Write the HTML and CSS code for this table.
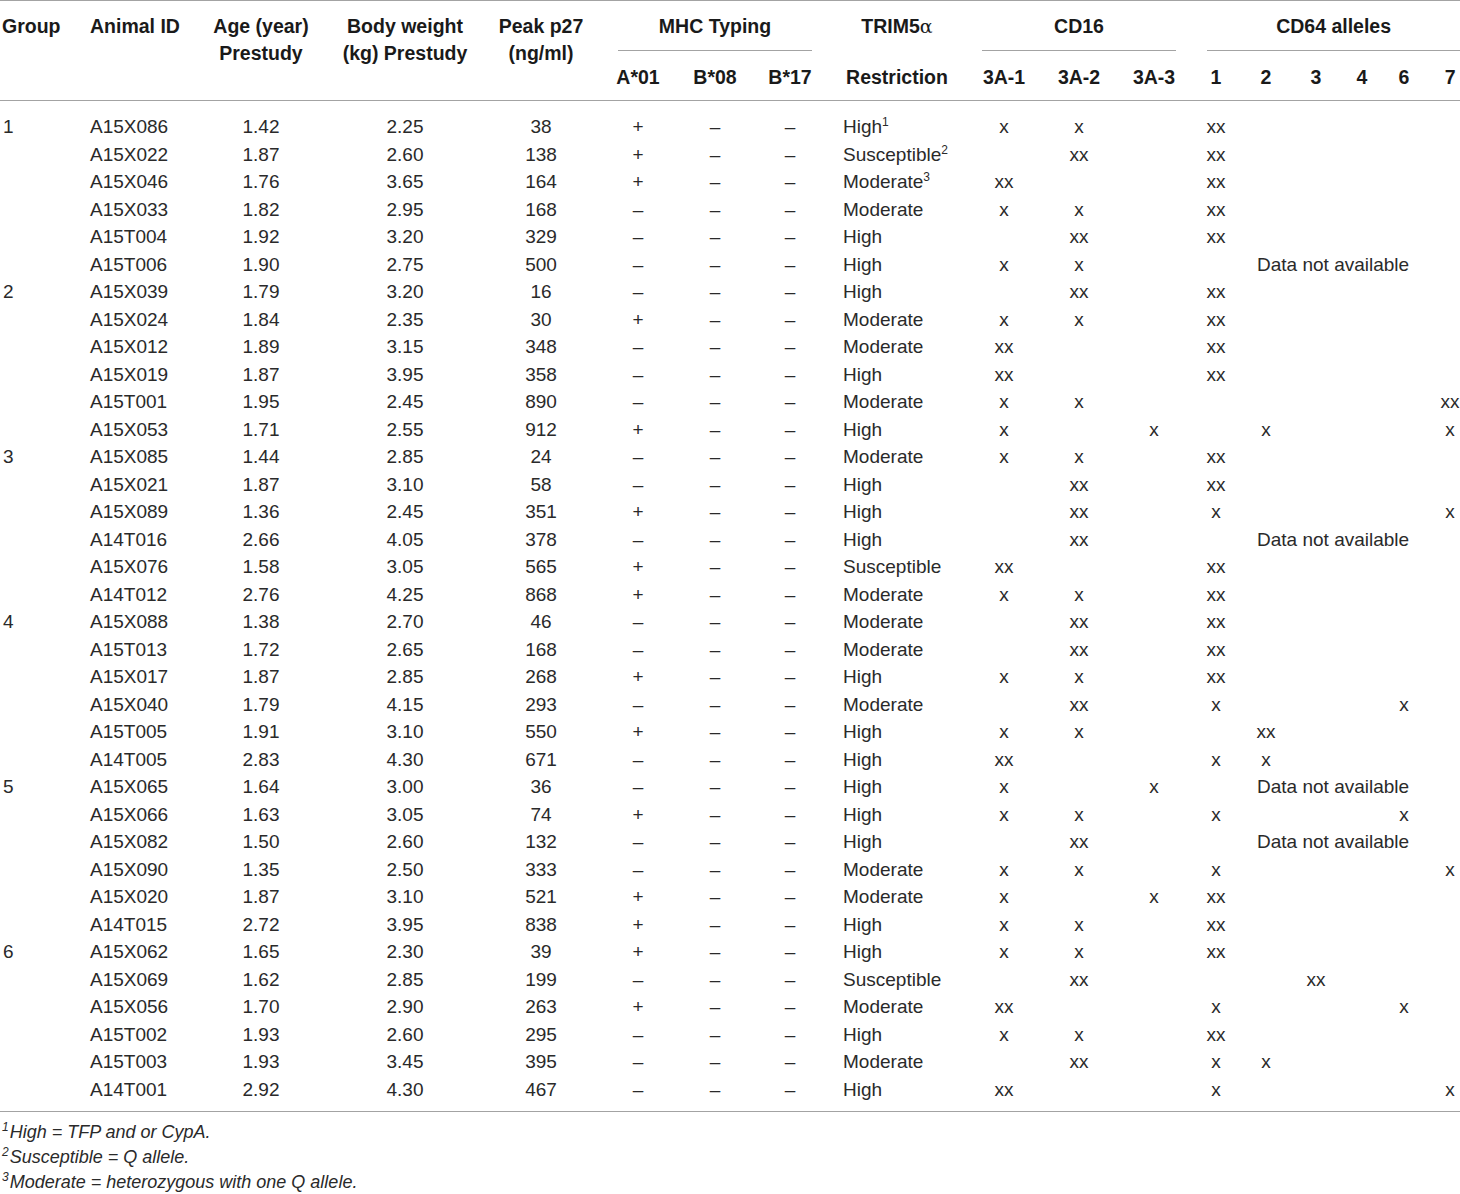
FILE: index.html
```html
<!DOCTYPE html>
<html lang="en">
<head>
<meta charset="utf-8">
<title>Table</title>
<link rel="stylesheet" href="styles.css">
</head>
<body>
<div class="table-wrap">
<table class="data">
<colgroup>
<col class="w88"><col class="w117"><col class="w112"><col class="w176"><col class="w96">
<col class="w98"><col class="w56"><col class="w94">
<col class="w120">
<col class="w94"><col class="w56"><col class="w94">
<col class="w30"><col class="w70"><col class="w30"><col class="w62"><col class="w22"><col class="w45">
</colgroup>
<thead>
<tr class="h1">
<th rowspan="2" class="span l">Group</th>
<th rowspan="2" class="span l">Animal ID</th>
<th rowspan="2" class="span">Age (year)<br>Prestudy</th>
<th rowspan="2" class="span">Body weight<br>(kg) Prestudy</th>
<th rowspan="2" class="span">Peak p27<br>(ng/ml)</th>
<th colspan="3" class="grp"><div class="rule mhc">MHC Typing</div></th>
<th class="top">TRIM5<span class="alpha">α</span></th>
<th colspan="3" class="grp"><div class="rule cd16">CD16</div></th>
<th colspan="6" class="grp"><div class="rule cd64">CD64 alleles</div></th>
</tr>
<tr class="h2">
<th>A*01</th><th>B*08</th><th>B*17</th>
<th>Restriction</th>
<th>3A-1</th><th>3A-2</th><th>3A-3</th>
<th>1</th><th>2</th><th>3</th><th>4</th><th>6</th><th class="c7">7</th>
</tr>
</thead>
<tbody>
<tr class="first"><td>1</td><td>A15X086</td><td>1.42</td><td>2.25</td><td>38</td><td>+</td><td>–</td><td>–</td><td>High<sup>1</sup></td><td>x</td><td>x</td><td></td><td>xx</td><td></td><td></td><td></td><td></td><td></td></tr>
<tr><td></td><td>A15X022</td><td>1.87</td><td>2.60</td><td>138</td><td>+</td><td>–</td><td>–</td><td>Susceptible<sup>2</sup></td><td></td><td>xx</td><td></td><td>xx</td><td></td><td></td><td></td><td></td><td></td></tr>
<tr><td></td><td>A15X046</td><td>1.76</td><td>3.65</td><td>164</td><td>+</td><td>–</td><td>–</td><td>Moderate<sup>3</sup></td><td>xx</td><td></td><td></td><td>xx</td><td></td><td></td><td></td><td></td><td></td></tr>
<tr><td></td><td>A15X033</td><td>1.82</td><td>2.95</td><td>168</td><td>–</td><td>–</td><td>–</td><td>Moderate</td><td>x</td><td>x</td><td></td><td>xx</td><td></td><td></td><td></td><td></td><td></td></tr>
<tr><td></td><td>A15T004</td><td>1.92</td><td>3.20</td><td>329</td><td>–</td><td>–</td><td>–</td><td>High</td><td></td><td>xx</td><td></td><td>xx</td><td></td><td></td><td></td><td></td><td></td></tr>
<tr><td></td><td>A15T006</td><td>1.90</td><td>2.75</td><td>500</td><td>–</td><td>–</td><td>–</td><td>High</td><td>x</td><td>x</td><td></td><td></td><td colspan="5" class="na">Data not available</td></tr>
<tr><td>2</td><td>A15X039</td><td>1.79</td><td>3.20</td><td>16</td><td>–</td><td>–</td><td>–</td><td>High</td><td></td><td>xx</td><td></td><td>xx</td><td></td><td></td><td></td><td></td><td></td></tr>
<tr><td></td><td>A15X024</td><td>1.84</td><td>2.35</td><td>30</td><td>+</td><td>–</td><td>–</td><td>Moderate</td><td>x</td><td>x</td><td></td><td>xx</td><td></td><td></td><td></td><td></td><td></td></tr>
<tr><td></td><td>A15X012</td><td>1.89</td><td>3.15</td><td>348</td><td>–</td><td>–</td><td>–</td><td>Moderate</td><td>xx</td><td></td><td></td><td>xx</td><td></td><td></td><td></td><td></td><td></td></tr>
<tr><td></td><td>A15X019</td><td>1.87</td><td>3.95</td><td>358</td><td>–</td><td>–</td><td>–</td><td>High</td><td>xx</td><td></td><td></td><td>xx</td><td></td><td></td><td></td><td></td><td></td></tr>
<tr><td></td><td>A15T001</td><td>1.95</td><td>2.45</td><td>890</td><td>–</td><td>–</td><td>–</td><td>Moderate</td><td>x</td><td>x</td><td></td><td></td><td></td><td></td><td></td><td></td><td>xx</td></tr>
<tr><td></td><td>A15X053</td><td>1.71</td><td>2.55</td><td>912</td><td>+</td><td>–</td><td>–</td><td>High</td><td>x</td><td></td><td>x</td><td></td><td>x</td><td></td><td></td><td></td><td>x</td></tr>
<tr><td>3</td><td>A15X085</td><td>1.44</td><td>2.85</td><td>24</td><td>–</td><td>–</td><td>–</td><td>Moderate</td><td>x</td><td>x</td><td></td><td>xx</td><td></td><td></td><td></td><td></td><td></td></tr>
<tr><td></td><td>A15X021</td><td>1.87</td><td>3.10</td><td>58</td><td>–</td><td>–</td><td>–</td><td>High</td><td></td><td>xx</td><td></td><td>xx</td><td></td><td></td><td></td><td></td><td></td></tr>
<tr><td></td><td>A15X089</td><td>1.36</td><td>2.45</td><td>351</td><td>+</td><td>–</td><td>–</td><td>High</td><td></td><td>xx</td><td></td><td>x</td><td></td><td></td><td></td><td></td><td>x</td></tr>
<tr><td></td><td>A14T016</td><td>2.66</td><td>4.05</td><td>378</td><td>–</td><td>–</td><td>–</td><td>High</td><td></td><td>xx</td><td></td><td></td><td colspan="5" class="na">Data not available</td></tr>
<tr><td></td><td>A15X076</td><td>1.58</td><td>3.05</td><td>565</td><td>+</td><td>–</td><td>–</td><td>Susceptible</td><td>xx</td><td></td><td></td><td>xx</td><td></td><td></td><td></td><td></td><td></td></tr>
<tr><td></td><td>A14T012</td><td>2.76</td><td>4.25</td><td>868</td><td>+</td><td>–</td><td>–</td><td>Moderate</td><td>x</td><td>x</td><td></td><td>xx</td><td></td><td></td><td></td><td></td><td></td></tr>
<tr><td>4</td><td>A15X088</td><td>1.38</td><td>2.70</td><td>46</td><td>–</td><td>–</td><td>–</td><td>Moderate</td><td></td><td>xx</td><td></td><td>xx</td><td></td><td></td><td></td><td></td><td></td></tr>
<tr><td></td><td>A15T013</td><td>1.72</td><td>2.65</td><td>168</td><td>–</td><td>–</td><td>–</td><td>Moderate</td><td></td><td>xx</td><td></td><td>xx</td><td></td><td></td><td></td><td></td><td></td></tr>
<tr><td></td><td>A15X017</td><td>1.87</td><td>2.85</td><td>268</td><td>+</td><td>–</td><td>–</td><td>High</td><td>x</td><td>x</td><td></td><td>xx</td><td></td><td></td><td></td><td></td><td></td></tr>
<tr><td></td><td>A15X040</td><td>1.79</td><td>4.15</td><td>293</td><td>–</td><td>–</td><td>–</td><td>Moderate</td><td></td><td>xx</td><td></td><td>x</td><td></td><td></td><td></td><td>x</td><td></td></tr>
<tr><td></td><td>A15T005</td><td>1.91</td><td>3.10</td><td>550</td><td>+</td><td>–</td><td>–</td><td>High</td><td>x</td><td>x</td><td></td><td></td><td>xx</td><td></td><td></td><td></td><td></td></tr>
<tr><td></td><td>A14T005</td><td>2.83</td><td>4.30</td><td>671</td><td>–</td><td>–</td><td>–</td><td>High</td><td>xx</td><td></td><td></td><td>x</td><td>x</td><td></td><td></td><td></td><td></td></tr>
<tr><td>5</td><td>A15X065</td><td>1.64</td><td>3.00</td><td>36</td><td>–</td><td>–</td><td>–</td><td>High</td><td>x</td><td></td><td>x</td><td></td><td colspan="5" class="na">Data not available</td></tr>
<tr><td></td><td>A15X066</td><td>1.63</td><td>3.05</td><td>74</td><td>+</td><td>–</td><td>–</td><td>High</td><td>x</td><td>x</td><td></td><td>x</td><td></td><td></td><td></td><td>x</td><td></td></tr>
<tr><td></td><td>A15X082</td><td>1.50</td><td>2.60</td><td>132</td><td>–</td><td>–</td><td>–</td><td>High</td><td></td><td>xx</td><td></td><td></td><td colspan="5" class="na">Data not available</td></tr>
<tr><td></td><td>A15X090</td><td>1.35</td><td>2.50</td><td>333</td><td>–</td><td>–</td><td>–</td><td>Moderate</td><td>x</td><td>x</td><td></td><td>x</td><td></td><td></td><td></td><td></td><td>x</td></tr>
<tr><td></td><td>A15X020</td><td>1.87</td><td>3.10</td><td>521</td><td>+</td><td>–</td><td>–</td><td>Moderate</td><td>x</td><td></td><td>x</td><td>xx</td><td></td><td></td><td></td><td></td><td></td></tr>
<tr><td></td><td>A14T015</td><td>2.72</td><td>3.95</td><td>838</td><td>+</td><td>–</td><td>–</td><td>High</td><td>x</td><td>x</td><td></td><td>xx</td><td></td><td></td><td></td><td></td><td></td></tr>
<tr><td>6</td><td>A15X062</td><td>1.65</td><td>2.30</td><td>39</td><td>+</td><td>–</td><td>–</td><td>High</td><td>x</td><td>x</td><td></td><td>xx</td><td></td><td></td><td></td><td></td><td></td></tr>
<tr><td></td><td>A15X069</td><td>1.62</td><td>2.85</td><td>199</td><td>–</td><td>–</td><td>–</td><td>Susceptible</td><td></td><td>xx</td><td></td><td></td><td></td><td>xx</td><td></td><td></td><td></td></tr>
<tr><td></td><td>A15X056</td><td>1.70</td><td>2.90</td><td>263</td><td>+</td><td>–</td><td>–</td><td>Moderate</td><td>xx</td><td></td><td></td><td>x</td><td></td><td></td><td></td><td>x</td><td></td></tr>
<tr><td></td><td>A15T002</td><td>1.93</td><td>2.60</td><td>295</td><td>–</td><td>–</td><td>–</td><td>High</td><td>x</td><td>x</td><td></td><td>xx</td><td></td><td></td><td></td><td></td><td></td></tr>
<tr><td></td><td>A15T003</td><td>1.93</td><td>3.45</td><td>395</td><td>–</td><td>–</td><td>–</td><td>Moderate</td><td></td><td>xx</td><td></td><td>x</td><td>x</td><td></td><td></td><td></td><td></td></tr>
<tr class="last"><td></td><td>A14T001</td><td>2.92</td><td>4.30</td><td>467</td><td>–</td><td>–</td><td>–</td><td>High</td><td>xx</td><td></td><td></td><td>x</td><td></td><td></td><td></td><td></td><td>x</td></tr>
</tbody>
</table>
</div>
<div class="notes">
<p class="note"><sup>1</sup>High = TFP and or CypA.</p>
<p class="note"><sup>2</sup>Susceptible = Q allele.</p>
<p class="note"><sup>3</sup>Moderate = heterozygous with one Q allele.</p>
</div>
</body>
</html>
```

FILE: styles.css
```css
html, body {
  margin: 0;
  padding: 0;
  background: #ffffff;
}

body {
  font-family: "Liberation Sans", Arial, sans-serif;
  color: #231f20;
  width: 1460px;
}

.table-wrap {
  border-top: 1px solid #a3a3a3;
}

.data {
  width: 1460px;
  table-layout: fixed;
  border-collapse: separate;
  border-spacing: 0;
}

.w88 { width: 88px; }
.w117 { width: 117px; }
.w112 { width: 112px; }
.w176 { width: 176px; }
.w96 { width: 96px; }
.w98 { width: 98px; }
.w56 { width: 56px; }
.w94 { width: 94px; }
.w120 { width: 120px; }
.w30 { width: 30px; }
.w70 { width: 70px; }
.w62 { width: 62px; }
.w22 { width: 22px; }
.w45 { width: 45px; }

.data th {
  font-weight: bold;
  font-size: 19.5px;
  line-height: 27px;
  color: #1a1a1a;
  text-align: center;
  padding: 0;
  white-space: nowrap;
}

.data th.l {
  text-align: left;
  padding-left: 2px;
}

.data th.span {
  vertical-align: top;
  padding-top: 12px;
  border-bottom: 1px solid #a3a3a3;
}

.h1 th.top {
  vertical-align: top;
  padding-top: 12px;
}

.h1 th.grp {
  vertical-align: top;
  padding-top: 12px;
}

.rule {
  padding-bottom: 10px;
  border-bottom: 1px solid #a3a3a3;
}

.rule.mhc { margin: 0 25px 0 29px; }
.rule.cd16 { margin: 0 25px 0 25px; }
.rule.cd64 { margin: 0 0 0 6px; }

.alpha {
  font-family: "DejaVu Serif", serif;
  font-weight: normal;
  font-size: 19px;
}

.h2 th {
  padding-top: 13px;
  padding-bottom: 9px;
  border-bottom: 1px solid #a3a3a3;
}

.h2 th.c7 {
  padding-left: 25px;
}

.data td {
  font-size: 19px;
  line-height: 27.5px;
  height: 27.5px;
  padding: 0;
  text-align: center;
  white-space: nowrap;
  color: #2a2a2a;
  vertical-align: middle;
}

.data td:nth-child(1) {
  text-align: left;
  padding-left: 3px;
}

.data td:nth-child(2) {
  text-align: left;
  padding-left: 2px;
}

.data td:nth-child(9) {
  text-align: left;
  padding-left: 6px;
}

.data td:nth-child(18) {
  padding-left: 25px;
}

.data td.na {
  text-align: left;
  padding-left: 26px;
}

.data tr.first td {
  padding-top: 12px;
}

.data tr.last td {
  padding-bottom: 8px;
  border-bottom: 1px solid #a3a3a3;
}

.data sup {
  font-size: 12px;
  line-height: 0;
  vertical-align: 7px;
}

.notes {
  padding-top: 8px;
}

.note {
  margin: 0;
  font-style: italic;
  font-size: 18px;
  line-height: 25px;
  color: #2a2a2a;
  padding-left: 2px;
}

.note sup {
  font-size: 12px;
  line-height: 0;
  vertical-align: 7px;
  margin-right: 1px;
}
```
